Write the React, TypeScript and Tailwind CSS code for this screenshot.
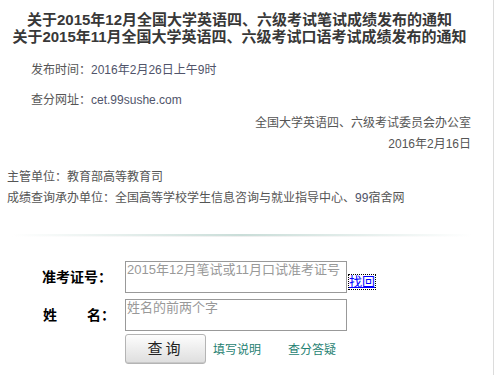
import React from "react";

const bodyFont = {
  fontFamily: '"Liberation Sans", "Noto Sans CJK SC", sans-serif',
};

const InfoLine = ({ label, value, className = "" }: { label: string; value: string; className?: string }) => (
  <div className={`h-[18px] leading-[18px] text-[12px] ${className}`}>
    <span className="text-[#555]">{label}</span>
    <span className="text-[#50546a]">{value}</span>
  </div>
);

export default function App() {
  return (
    <div className="w-[495px] h-[375px] bg-white overflow-hidden" style={bodyFont}>
      <div className="w-[494px] h-[375px] border-r border-[#dcdcdc]">
        {/* titles */}
        <div className="pt-[11px] pr-[14px] text-center text-[15px] leading-[17px] font-bold text-[#383838]">
          <div>关于2015年12月全国大学英语四、六级考试笔试成绩发布的通知</div>
          <div>关于2015年11月全国大学英语四、六级考试口语考试成绩发布的通知</div>
        </div>

        {/* info */}
        <div className="pl-[31px]">
          <InfoLine className="mt-[16px]" label="发布时间：" value="2016年2月26日上午9时" />
          <InfoLine className="mt-[12px]" label="查分网址：" value="cet.99sushe.com" />
        </div>
        <div className="pr-[22px] text-right text-[12px] leading-[18px] text-[#555]">
          <div className="mt-[5px] h-[18px]">全国大学英语四、六级考试委员会办公室</div>
          <div className="mt-[3px] h-[18px]">2016年2月16日</div>
        </div>
        <div className="pl-[7px] text-[12px] leading-[18px] text-[#555]">
          <div className="mt-[15px] h-[18px]">主管单位：教育部高等教育司</div>
          <div className="mt-[3px] h-[18px]">
            成绩查询承办单位：全国高等学校学生信息咨询与就业指导中心、<span className="text-[#50546a]">99</span>宿舍网
          </div>
        </div>

        {/* divider */}
        <div className="mt-[27px] ml-[12px] w-[460px]">
          <div className="h-[2px] bg-gradient-to-r from-transparent via-[#c9ddd8] to-transparent" />
          <div className="h-[1px] bg-gradient-to-r from-transparent via-[#eeeeee] to-transparent" />
        </div>

        {/* form */}
        <div className="mt-[24px] pl-[42px] text-[14px]">
          <div className="flex items-center">
            <div className="w-[83px] font-bold text-black leading-[16px]">准考证号：</div>
            <textarea
              className="w-[222px] h-[32px] border border-[#999] resize-none text-[13px] leading-[15px] px-[1px] py-0 outline-none placeholder:text-[#999] bg-white"
              placeholder="2015年12月笔试或11月口试准考证号"
            />
            <a
              href="#"
              className="ml-[2px] mt-[10px] text-[13px] leading-[14px] text-[#0000ff] underline outline-1 outline-dotted outline-black"
            >
              找回
            </a>
          </div>
          <div className="flex items-center mt-[6px]">
            <div className="w-[83px] font-bold text-black leading-[16px] pl-[1px]">
              <span>姓</span>
              <span className="ml-[30px]">名：</span>
            </div>
            <textarea
              className="w-[222px] h-[32px] border border-[#999] resize-none text-[13px] leading-[15px] px-[1px] py-0 outline-none placeholder:text-[#999] bg-white"
              placeholder="姓名的前两个字"
            />
          </div>
          <div className="flex items-center mt-[3px]">
            <div className="w-[83px]" />
            <button className="w-[81px] h-[30px] rounded-[3px] border border-[#b4b4b4] bg-gradient-to-b from-[#fdfdfd] to-[#dedede] text-[15px] tracking-[3px] text-[#222] shadow-[inset_0_-1px_0_#c8c8c8]">
              查询
            </button>
            <a href="#" className="ml-[7px] mt-[1px] text-[12px] text-[#1f7f72]">
              填写说明
            </a>
            <a href="#" className="ml-[27px] mt-[1px] text-[12px] text-[#1f7f72]">
              查分答疑
            </a>
          </div>
        </div>
      </div>
    </div>
  );
}
